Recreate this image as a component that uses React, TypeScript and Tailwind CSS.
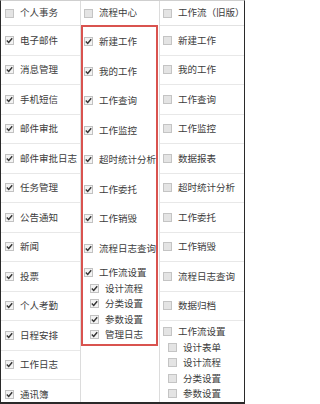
import React from "react";

type Item = { label: string; checked: boolean; sub?: boolean };

function Box({ checked }: { checked: boolean }) {
  return checked ? (
    <span className="flex h-[9px] w-[9px] shrink-0 items-center justify-center border border-[#c2c2c2] bg-[#f3f3f3]">
      <svg width="7" height="7" viewBox="0 0 7 7">
        <path d="M0.8 3.6 L2.7 5.5 L6.2 1.2" fill="none" stroke="#333" strokeWidth="1.4" />
      </svg>
    </span>
  ) : (
    <span className="h-[9px] w-[9px] shrink-0 border border-[#c4c4c4] bg-[#e4e4e4]" />
  );
}

function Label({ checked, text }: { checked: boolean; text: string }) {
  return (
    <div className="flex items-center gap-[6px] whitespace-nowrap">
      <Box checked={checked} />
      <span className="leading-none">{text}</span>
    </div>
  );
}

const col1 = ["电子邮件", "消息管理", "手机短信", "邮件审批", "邮件审批日志", "任务管理", "公告通知", "新闻", "投票", "个人考勤", "日程安排", "工作日志", "通讯簿"];
const col2 = ["新建工作", "我的工作", "工作查询", "工作监控", "超时统计分析", "工作委托", "工作销毁", "流程日志查询"];
const col2Sub = ["设计流程", "分类设置", "参数设置", "管理日志"];
const col3 = ["新建工作", "我的工作", "工作查询", "工作监控", "数据报表", "超时统计分析", "工作委托", "工作销毁", "流程日志查询", "数据归档"];
const col3Sub = ["设计表单", "设计流程", "分类设置", "参数设置"];

export default function App() {
  return (
    <div
      className="flex h-[404px] w-[245px] overflow-hidden border-x border-b-2 border-t border-x-[#2a2a2a] border-b-[#2a2a2a] border-t-[#cfcfcf] bg-white text-[9.5px] text-[#3c3c3c]"
      style={{ fontFamily: '"Noto Sans CJK SC", "Noto Sans", sans-serif' }}
    >
      {/* column 1 */}
      <div className="flex w-[80px] shrink-0 flex-col border-r border-[#dcdcdc]">
        <div className="flex h-[25px] shrink-0 items-center border-b border-[#e2e2e2] pl-[4px]">
          <Label checked={false} text="个人事务" />
        </div>
        {col1.map((t) => (
          <div key={t} className="flex h-[29.5px] shrink-0 items-center border-b border-[#e8e8e8] pl-[4px]">
            <Label checked={true} text={t} />
          </div>
        ))}
      </div>

      {/* column 2 */}
      <div className="flex w-[79px] shrink-0 flex-col border-r border-[#dcdcdc]">
        <div className="flex h-[24px] shrink-0 items-center pl-[3px]">
          <Label checked={false} text="流程中心" />
        </div>
        <div className="flex w-[77px] flex-col border-2 border-[#d9534f]">
          {col2.map((t) => (
            <div key={t} className="flex h-[29.5px] shrink-0 items-center pl-[1px]">
              <Label checked={true} text={t} />
            </div>
          ))}
          <div className="flex flex-col pb-[1px] pt-[2px]">
            <div className="flex h-[15.5px] items-center pl-[1px]">
              <Label checked={true} text="工作流设置" />
            </div>
            {col2Sub.map((t) => (
              <div key={t} className="flex h-[15.5px] items-center pl-[7px]">
                <Label checked={true} text={t} />
              </div>
            ))}
          </div>
        </div>
      </div>

      {/* column 3 */}
      <div className="flex min-w-0 flex-1 flex-col">
        <div className="flex h-[25px] shrink-0 items-center border-b border-[#e2e2e2] pl-[3px]">
          <Label checked={false} text="工作流（旧版）" />
        </div>
        {col3.map((t) => (
          <div key={t} className="flex h-[29.5px] shrink-0 items-center border-b border-[#e8e8e8] pl-[3px]">
            <Label checked={false} text={t} />
          </div>
        ))}
        <div className="flex flex-col pt-[3px]">
          <div className="flex h-[15.5px] items-center pl-[3px]">
            <Label checked={false} text="工作流设置" />
          </div>
          {col3Sub.map((t) => (
            <div key={t} className="flex h-[15.5px] items-center pl-[8px]">
              <Label checked={false} text={t} />
            </div>
          ))}
        </div>
      </div>
    </div>
  );
}
